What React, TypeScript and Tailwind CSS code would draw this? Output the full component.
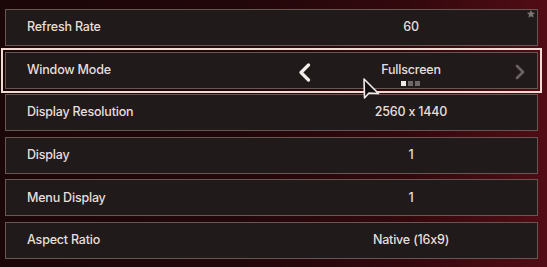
import React from "react";

const rows = [
  { label: "Refresh Rate", value: "60" },
  { label: "Window Mode", value: "Fullscreen", active: true },
  { label: "Display Resolution", value: "2560 x 1440" },
  { label: "Display", value: "1" },
  { label: "Menu Display", value: "1" },
  { label: "Aspect Ratio", value: "Native (16x9)" },
];

export default function App() {
  return (
    <div
      className="relative w-[547px] h-[267px] overflow-hidden bg-[linear-gradient(90deg,#1b0608_0%,#22070a_45%,#33080d_75%,#520c15_100%)] pl-[5px] pr-[9px] pt-[9px] flex flex-col gap-[5.6px]"
      style={{ fontFamily: "Inter, 'Noto Sans', sans-serif" }}
    >
      {rows.map((r) => (
        <div
          key={r.label}
          className={
            "relative h-[37px] shrink-0 flex items-center bg-[#211a1a] border border-[#665753] " +
            (r.active ? "outline-2 outline-offset-2 outline-[#f1dcd5]" : "")
          }
        >
          <div className="w-[279px] pl-[21px] text-[12.5px] font-medium text-[#e6dfdc] tracking-[-0.2px]">
            {r.label}
          </div>
          <div className="relative flex-1 h-full flex items-center justify-center">
            <span className="text-[12.5px] font-medium text-[#e6dfdc] tracking-[-0.2px]">{r.value}</span>
            {r.active && (
              <>
                <svg
                  className="absolute left-[13px] top-[10px]"
                  width="13"
                  height="19"
                  viewBox="0 0 13 19"
                >
                  <path d="M10.5 2 L3 9.5 L10.5 17" fill="none" stroke="#f3ece8" strokeWidth="3.2" strokeLinecap="round" strokeLinejoin="round" />
                </svg>
                <svg
                  className="absolute right-[12px] top-[11px]"
                  width="10"
                  height="16"
                  viewBox="0 0 10 16"
                >
                  <path d="M2 2 L8 8 L2 14" fill="none" stroke="#6c625f" strokeWidth="2.6" strokeLinecap="round" strokeLinejoin="round" />
                </svg>
                <div className="absolute left-[116px] top-[28px] flex gap-[2px]">
                  <div className="w-[5px] h-[5px] bg-[#eeeae6]" />
                  <div className="w-[5px] h-[5px] bg-[#6f6866]" />
                  <div className="w-[5px] h-[5px] bg-[#6f6866]" />
                </div>
              </>
            )}
          </div>
        </div>
      ))}
      <svg className="absolute left-[526px] top-[9px]" width="10" height="10" viewBox="0 0 10 10">
        <path d="M5 0.8 L6.2 3.6 L9.2 3.8 L6.9 5.8 L7.6 8.8 L5 7.2 L2.4 8.8 L3.1 5.8 L0.8 3.8 L3.8 3.6 Z" fill="#7d7371" />
      </svg>
      <svg className="absolute left-[362px] top-[77px]" width="20" height="24" viewBox="0 0 20 24">
        <path d="M2 2 L2.5 21 L7 16 L16.5 16.5 Z" fill="#151112" stroke="#f1ece9" strokeWidth="1.6" strokeLinejoin="round" />
      </svg>
    </div>
  );
}
